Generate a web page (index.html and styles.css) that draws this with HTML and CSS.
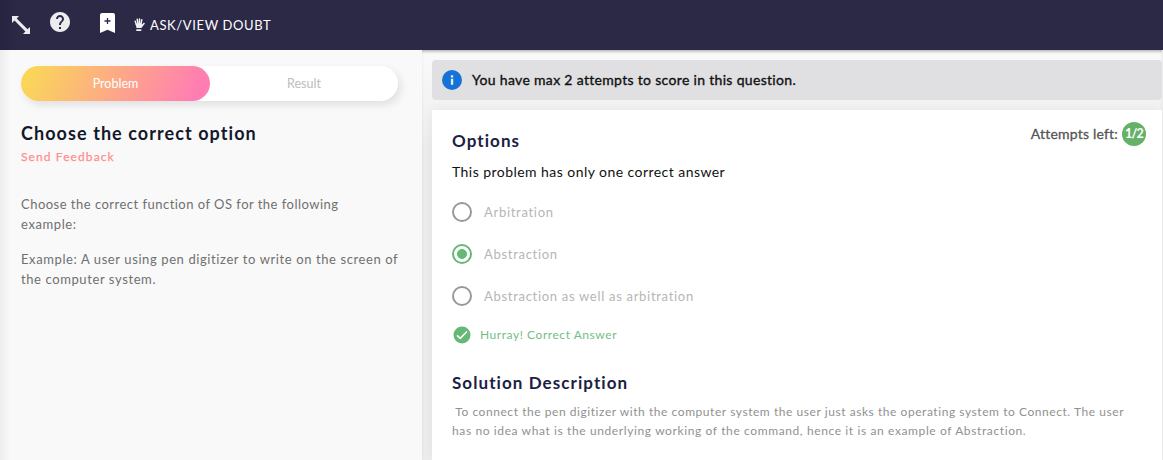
FILE: index.html
```html
<!DOCTYPE html>
<html lang="en">
<head>
<meta charset="utf-8">
<title>Choose the correct option</title>
<link rel="stylesheet" href="styles.css">
</head>
<body>
<header class="topbar">
  <svg class="icon-expand" width="18" height="18" viewBox="0 0 18 18"><path fill="#ececee" d="M0 0h7L4.700 2.500 15.500 13.300 18 11v7h-7l2.400-2.500L2.500 4.600 0 7z"/></svg>
  <svg class="icon-help" width="20" height="20" viewBox="2 2 20 20"><path fill="#ececee" d="M12 2C6.480 2 2 6.480 2 12s4.480 10 10 10 10-4.480 10-10S17.520 2 12 2zm1 17h-2v-2h2v2zm2.070-7.750l-.9.920C13.450 12.900 13 13.500 13 15h-2v-.5c0-1.100.45-2.100 1.170-2.830l1.240-1.260c.37-.36.59-.86.59-1.410 0-1.100-.9-2-2-2s-2 .9-2 2H8c0-2.210 1.790-4 4-4s4 1.790 4 4c0 .88-.36 1.680-.93 2.250z"/></svg>
  <svg class="icon-bookmark" width="15" height="20" viewBox="0 0 15 20"><path fill="#fff" d="M2 0h11a2 2 0 0 1 2 2v18l-7.500-3.300L0 20V2a2 2 0 0 1 2-2z"/><path d="M7.500 5v6M4.500 8h6" stroke="#2c2947" stroke-width="1.300"/></svg>
  <svg class="icon-hand" width="11" height="14" viewBox="0 0 11 14"><g stroke="#f1f1f3" stroke-linecap="round" fill="none"><path stroke-width="1.500" d="M1.200 3.200 2.500 7M3.200 1.300 4 6M5.500.9V6M7.800 1.700 7 6.500"/><path stroke-width="1.600" d="M10 5.500 7.500 8.500"/></g><path fill="#f1f1f3" d="M1.500 5.500h6.200l1 2L7.500 10h-5zM2.300 11.200h5V13h-5z"/></svg>
  <span class="doubt">ASK/VIEW DOUBT</span>
</header>
<main class="workspace">
  <section class="problem">
    <nav class="tabs"><span class="tab tab-active">Problem</span><span class="tab">Result</span></nav>
    <h1 class="title">Choose the correct option</h1>
    <a class="feedback">Send Feedback</a>
    <div class="statement">
      <p><span class="q1">Choose the correct function of OS for the following</span><br>example:</p>
      <p>Example: A user using pen digitizer to write on the screen of<br>the computer system.</p>
    </div>
  </section>
  <section class="answer">
    <div class="notice">
      <svg width="20" height="20" viewBox="0 0 20 20"><circle cx="10" cy="10" r="10" fill="#1673d6"/><path fill="#e3eefb" d="M8.900 5.300h2.300v2.100H8.900zM8.900 8.700h2.300v6H8.900z"/></svg>
      <span class="notice-text">You have max 2 attempts to score in this question.</span>
    </div>
    <div class="card">
      <div class="card-head">
        <h2 class="heading options-heading">Options</h2>
        <div class="attempts"><span class="attempts-label">Attempts left:</span><b class="badge">1/2</b></div>
      </div>
      <p class="hint">This problem has only one correct answer</p>
      <div class="option"><i class="radio"></i><span>Arbitration</span></div>
      <div class="option"><i class="radio radio-on"></i><span>Abstraction</span></div>
      <div class="option"><i class="radio"></i><span>Abstraction as well as arbitration</span></div>
      <div class="verdict"><svg width="18" height="18" viewBox="0 0 18 18"><circle cx="9" cy="9" r="8.500" fill="#65b876"/><path d="M4 9.300 7.300 12.400 14 5.500" fill="none" stroke="#fff" stroke-width="1.600"/></svg><span class="verdict-text">Hurray! Correct Answer</span></div>
      <h2 class="heading solution-heading">Solution Description</h2>
      <p class="solution"><span>&nbsp;To connect the pen digitizer with the computer system the user just asks the operating system to Connect. The user</span><br><span class="s2">has no idea what is the underlying working of the command, hence it is an example of Abstraction.</span></p>
    </div>
  </section>
</main>
</body>
</html>
```
FILE: styles.css
```css
* { box-sizing: border-box; }
body { margin: 0; width: 1163px; height: 460px; overflow: hidden; font-family: Lato, sans-serif; background: #ededed; }
h1, h2, p { margin: 0; font-weight: normal; }
svg { flex: none; display: block; }
.topbar { height: 50px; display: flex; background: linear-gradient(90deg, #252340, #2c2947 18px); color: #fff; padding-left: 12px; }
.icon-expand { margin-top: 16px; }
.icon-help { margin: 12px 0 0 20px; }
.icon-bookmark { margin: 13px 0 0 30px; }
.icon-hand { margin: 18px 0 0 19px; }
.doubt { margin-left: 5px; line-height: 51px; font-size: 13px; letter-spacing: .62px; white-space: nowrap; }
.workspace { display: flex; height: 410px; }
.problem { width: 422px; flex: none; padding: 16px 21px 0; background: linear-gradient(90deg, #ededed, #f9f9f9 11px); white-space: nowrap; }
.tabs { display: flex; width: 377px; height: 35px; border-radius: 18px; background: #fff; box-shadow: 3px 4px 9px rgba(0,0,0,.1); }
.tab { width: 188px; text-align: center; font-size: 12.5px; line-height: 36px; height: 35px; color: #bdbdbd; }
.tab-active { width: 189px; color: #fff; border-radius: 18px; background: linear-gradient(115deg, #fad956 3%, #ff7db3 92%); }
.title { margin-top: 20px; font-size: 18px; line-height: 24px; font-weight: 700; letter-spacing: 1.07px; color: #14182b; }
.feedback { display: block; margin-top: 3px; line-height: 18px; font-size: 12px; -webkit-text-stroke: .25px #ff8f8f; letter-spacing: 1.1px; color: #ff8f8f; }
.statement { margin-top: 28px; font-size: 13px; line-height: 20px; letter-spacing: .6px; color: #707070; }
.statement p + p { margin-top: 15px; }
.q1 { letter-spacing: .48px; }
.answer { width: 740px; padding: 10px 0 0 10px; background: linear-gradient(#fafafa, #ededed 100px); box-shadow: inset 0 3px 4px -3px rgba(0,0,0,.55); }
.notice { height: 40px; display: flex; align-items: center; gap: 10px; padding-left: 10px; border-radius: 4px; background: #e0e0e2; }
.notice-text { padding-bottom: 1px; font-size: 14px; -webkit-text-stroke: .35px #111; letter-spacing: .32px; color: #111; }
.card { margin-top: 10px; height: 350px; padding: 12px 16px 0 20px; background: #fff; box-shadow: 0 0 12px rgba(0,0,0,.05); white-space: nowrap; }
.card-head { display: flex; justify-content: space-between; height: 38px; }
.heading { font-size: 17px; font-weight: 700; line-height: 24px; letter-spacing: 1.07px; color: #1b2142; }
.options-heading { padding-top: 7px; }
.attempts { display: flex; align-items: center; height: 24px; gap: 4px; font-size: 14px; letter-spacing: .2px; color: #555; }
.attempts-label { padding-bottom: 1px; -webkit-text-stroke: .3px #555; }
.badge { width: 24px; height: 24px; border-radius: 50%; background: #65b168; color: #fff; text-align: center; line-height: 24px; font-size: 12.5px; letter-spacing: -.7px; }
.hint { font-size: 14px; line-height: 24px; letter-spacing: .45px; color: #111; }
.option { height: 42px; display: flex; align-items: center; gap: 12px; font-size: 13px; letter-spacing: .7px; color: #b6b6b6; }
.hint + .option { margin-top: 7px; }
.radio { width: 20px; height: 20px; border: 2px solid #999; border-radius: 50%; }
.radio-on { border-color: #65b876; background: radial-gradient(circle, #65b876 4.600px, transparent 5.200px); }
.verdict { height: 24px; margin-top: 6px; padding-left: 1px; display: flex; align-items: center; gap: 9px; font-size: 12px; letter-spacing: .55px; color: #74bd84; }
.verdict-text { padding-bottom: 1px; }
.solution-heading { margin-top: 24px; }
.solution { margin-top: 7px; font-size: 12px; line-height: 19px; letter-spacing: .555px; color: #919191; }
.s2 { letter-spacing: .615px; }
```
